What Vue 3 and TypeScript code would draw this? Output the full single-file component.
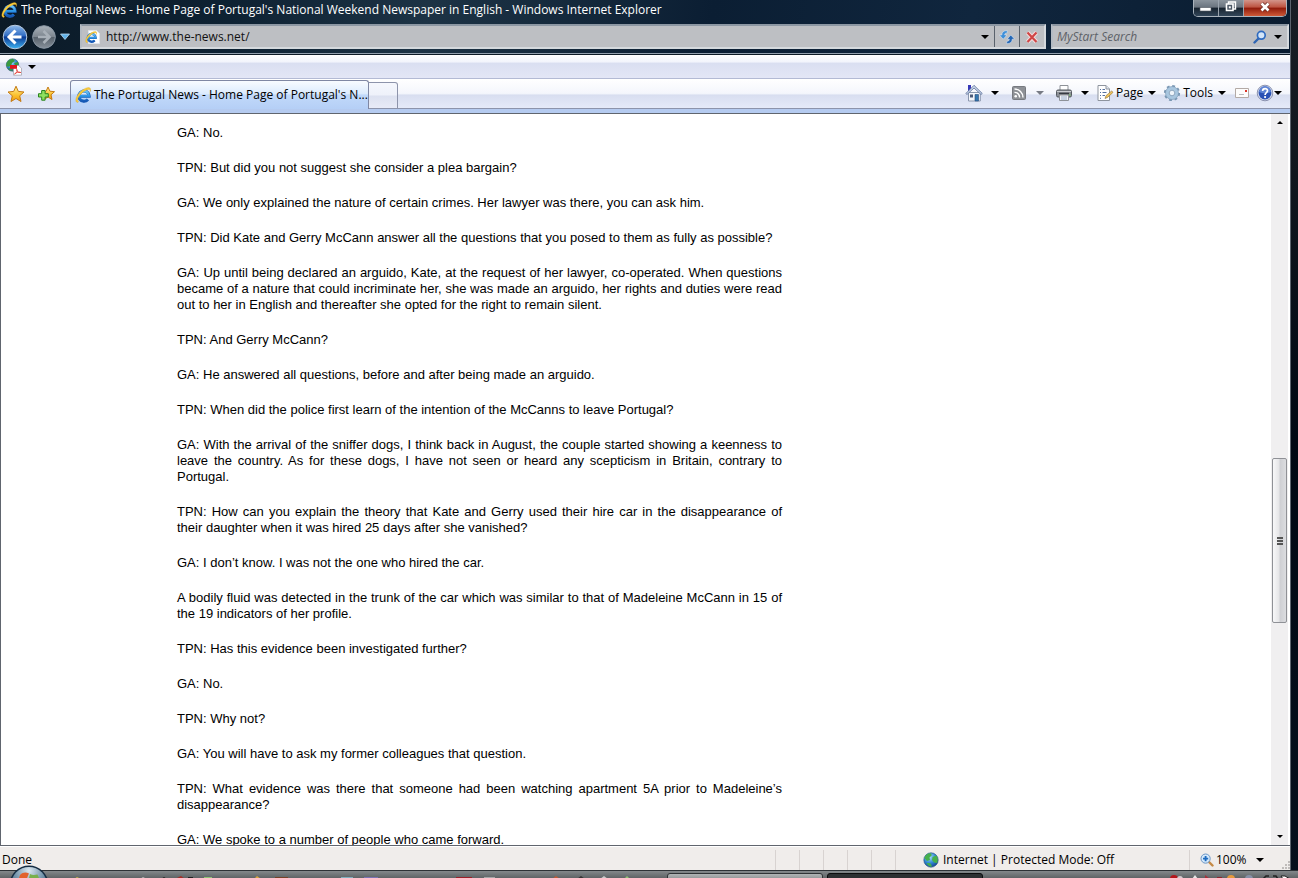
<script setup lang="ts">
import { ref } from 'vue'

interface Command {
  icon: string
  name: string
  label?: string
  arrow: boolean
  muted?: boolean
}

const address = ref('http://www.the-news.net/')
const query = ref('')
const pageTitle = "The Portugal News - Home Page of Portugal's National Weekend Newspaper in English"

const commands: Command[] = [
  { icon: 'home', name: 'home', arrow: true },
  { icon: 'feed', name: 'feeds', arrow: true, muted: true },
  { icon: 'print', name: 'print', arrow: true },
  { icon: 'page', name: 'page', label: 'Page', arrow: true },
  { icon: 'gear', name: 'tools', label: 'Tools', arrow: true },
  { icon: 'mail', name: 'mail', arrow: false },
  { icon: 'help', name: 'help', arrow: true },
]

const paragraphs: string[] = [
  'GA: No.',
  'TPN: But did you not suggest she consider a plea bargain?',
  'GA: We only explained the nature of certain crimes. Her lawyer was there, you can ask him.',
  'TPN: Did Kate and Gerry McCann answer all the questions that you posed to them as fully as possible?',
  'GA: Up until being declared an arguido, Kate, at the request of her lawyer, co-operated. When questions became of a nature that could incriminate her, she was made an arguido, her rights and duties were read out to her in English and thereafter she opted for the right to remain silent.',
  'TPN: And Gerry McCann?',
  'GA: He answered all questions, before and after being made an arguido.',
  'TPN: When did the police first learn of the intention of the McCanns to leave Portugal?',
  'GA: With the arrival of the sniffer dogs, I think back in August, the couple started showing a keenness to leave the country. As for these dogs, I have not seen or heard any scepticism in Britain, contrary to Portugal.',
  'TPN: How can you explain the theory that Kate and Gerry used their hire car in the disappearance of their daughter when it was hired 25 days after she vanished?',
  'GA: I don’t know. I was not the one who hired the car.',
  'A bodily fluid was detected in the trunk of the car which was similar to that of Madeleine McCann in 15 of the 19 indicators of her profile.',
  'TPN: Has this evidence been investigated further?',
  'GA: No.',
  'TPN: Why not?',
  'GA: You will have to ask my former colleagues that question.',
  'TPN: What evidence was there that someone had been watching apartment 5A prior to Madeleine’s disappearance?',
  'GA: We spoke to a number of people who came forward.',
]
</script>

<template>
  <div class="desktop">
    <svg class="defs" aria-hidden="true">
      <defs>
        <linearGradient id="g-e" x1="0" y1="0" x2="0" y2="1">
          <stop offset="0" stop-color="#6cc6f8" />
          <stop offset="0.5" stop-color="#2b95e6" />
          <stop offset="1" stop-color="#1557b5" />
        </linearGradient>
        <linearGradient id="g-back" x1="0" y1="0" x2="0" y2="1">
          <stop offset="0" stop-color="#8fb9ea" />
          <stop offset="0.45" stop-color="#2f6cc4" />
          <stop offset="0.5" stop-color="#0b3a94" />
          <stop offset="1" stop-color="#3fb4f2" />
        </linearGradient>
        <linearGradient id="g-fwd" x1="0" y1="0" x2="0" y2="1">
          <stop offset="0" stop-color="#aab2ba" />
          <stop offset="0.48" stop-color="#7d868f" />
          <stop offset="0.52" stop-color="#58626c" />
          <stop offset="1" stop-color="#87919b" />
        </linearGradient>
        <linearGradient id="g-star" x1="0" y1="0" x2="0" y2="1">
          <stop offset="0" stop-color="#fff2a0" />
          <stop offset="0.6" stop-color="#fbc02c" />
          <stop offset="1" stop-color="#f09a12" />
        </linearGradient>
        <radialGradient id="g-orb" cx="0.5" cy="0.1" r="0.8">
          <stop offset="0" stop-color="#dbe8f0" />
          <stop offset="0.5" stop-color="#7394ab" />
          <stop offset="1" stop-color="#2b4a66" />
        </radialGradient>
        <radialGradient id="g-globe" cx="0.4" cy="0.3" r="0.7">
          <stop offset="0" stop-color="#a6defa" />
          <stop offset="0.6" stop-color="#2f86d3" />
          <stop offset="1" stop-color="#174a94" />
        </radialGradient>
      </defs>
      <symbol id="i-ie" viewBox="0 0 16 16">
        <path d="M4.500 9.200h9.700a5.200 5.200 0 1 0-1.300 3.400" fill="none" stroke="#1a5db5" stroke-width="3" />
        <path d="M4.500 9.200h9.500a5 5 0 1 0-1.300 3.200" fill="none" stroke="url(#g-e)" stroke-width="2.300" />
        <path d="M2.300 15.600C-.4 14.500.8 9.800 4.400 5.800 8.100 1.800 13.300-.6 15.200 1.200c.8.900.5 2.300-.2 3.600.2-1.200.1-2-.6-2.300-1.500-.6-5.200 1-8.400 4.400C2.800 10.300 1.400 13.800 3.800 14.500c-.4.600-.9 1.100-1.500 1.100z" fill="#f8cc3c" stroke="#d59a18" stroke-width=".3" />
      </symbol>
      <symbol id="i-doc" viewBox="0 0 16 16">
        <path d="M3.500 1.500h8l3 3v10h-11z" fill="#fff" stroke="#dfe5ec" />
        <use href="#i-ie" x="0" y="2" width="12" height="12" />
      </symbol>
      <symbol id="i-globepdf" viewBox="0 0 18 18">
        <circle cx="7.500" cy="7" r="6.200" fill="url(#g-globe)" stroke="#35685a" stroke-width=".6" />
        <path d="M2 4.500C4 1.500 6 .8 8 1l2 2-3 2-1 3-3 .8-1.800-1zM9 5l4-1 .5 3-3 1zM3 10l4 .5 1 2.300-3-.5z" fill="#3b9a3f" />
        <path d="M8.500 7.500h5.200l2.800 2.700v7h-8z" fill="#fff" stroke="#a5a5b0" stroke-width=".8" />
        <path d="M5 7h7v3.800H5z" fill="#e0171c" />
        <path d="M9.500 16c3-1.500 3-4 2.300-4.700-.8.300.8 3.800 4 3.200-2-.7-4.500-.2-6.300 1.500z" fill="none" stroke="#e0302a" stroke-width=".8" />
      </symbol>
      <symbol id="i-star" viewBox="0 0 18 18">
        <path d="M9 1.200l2.300 5.200 5.700.6-4.300 3.800 1.300 5.700L9 13.500l-5 3 1.300-5.700L1 7l5.700-.6z" fill="url(#g-star)" stroke="#c47a12" stroke-linejoin="round" />
      </symbol>
      <symbol id="i-addstar" viewBox="0 0 18 18">
        <path d="M11 2l1.900 4.200 4.600.5-3.500 3.100 1 4.700-4-2.500-4 2.500 1-4.700-3.500-3.100 4.600-.5z" fill="url(#g-star)" stroke="#c47a12" stroke-linejoin="round" />
        <path d="M4.700 5.500h3.400v3.200h3.200V12H8.100v3.200H4.700V12H1.500V8.700h3.200z" fill="#8fe05f" stroke="#2b8520" />
      </symbol>
      <symbol id="i-home" viewBox="0 0 18 18">
        <path d="M3 1h3v6H3z" fill="#3538b8" />
        <path d="M3.500 8.500h11.800V17H3.500z" fill="#f3f6fb" stroke="#8a97ae" />
        <path d="M.8 9.500L9 1.300l8.300 8.200-1.300 1L9 4 2 10.500z" fill="#c8d5e8" stroke="#5a6f99" stroke-width=".8" />
        <path d="M10 10.500h3.500V17H10z" fill="#3477ae" stroke="#264b7c" stroke-width=".6" />
        <path d="M5 10.500h3v3H5z" fill="#4c5a78" />
      </symbol>
      <symbol id="i-feed" viewBox="0 0 18 18">
        <rect x="2.500" y="2.500" width="13" height="13" rx="1" fill="#8e9196" stroke="#777a80" />
        <circle cx="5.700" cy="12.300" r="1.300" fill="#fff" />
        <path d="M4.500 8.400a5 5 0 0 1 5.100 5.100M4.500 5a8.500 8.500 0 0 1 8.500 8.500" fill="none" stroke="#fff" stroke-width="1.400" />
      </symbol>
      <symbol id="i-print" viewBox="0 0 18 18">
        <path d="M5 1.500h8V7H5z" fill="#fff" stroke="#8e9298" />
        <rect x="1.500" y="6" width="15" height="7" rx="1.500" fill="#8c9096" stroke="#555a61" />
        <path d="M2 7.500h14" stroke="#c9ccd0" />
        <path d="M4 9.500h10" stroke="#373b41" stroke-width="1.500" />
        <path d="M4.500 11h9v5.500h-9z" fill="#f2f4f7" stroke="#8e9298" />
        <path d="M6 13h6M6 15h6" stroke="#9bb0cc" />
        <path d="M14 11h1.500" stroke="#71d65a" />
      </symbol>
      <symbol id="i-page" viewBox="0 0 18 18">
        <path d="M2 1.500h8l3.500 3.500v11.500H2z" fill="#fff" stroke="#8e949e" />
        <path d="M10 1.500V5h3.500" fill="#dfe5ee" stroke="#8e949e" />
        <path d="M4 5.500h1M6.500 5.500H9M4 8.500h1M6.500 8.500h4M4 11.500h1M6.500 11.500H9M4 14.300h1" stroke="#56719f" />
        <path d="M9 14.500l1-2.800 5.700-4.800 1.300 1.500-5.500 5z" fill="#f0c45a" stroke="#8b6c30" stroke-width=".6" />
      </symbol>
      <symbol id="i-gear" viewBox="0 0 18 18">
        <circle cx="9" cy="9" r="7" fill="none" stroke="#7896b2" stroke-width="2.200" stroke-dasharray="2.800 2.700" />
        <circle cx="9" cy="9" r="4.800" fill="none" stroke="#a8c6df" stroke-width="3.500" />
        <circle cx="9" cy="9" r="2.800" fill="#eef4fa" stroke="#7593b0" stroke-width=".8" />
        <circle cx="9" cy="9" r="6.500" fill="none" stroke="#7896b2" stroke-width=".6" />
      </symbol>
      <symbol id="i-mail" viewBox="0 0 18 18">
        <path d="M2.500 4.500h13v9h-13z" fill="#fdfcfb" stroke="#b3aaa6" />
        <path d="M12 6h2v2h-2z" fill="#dc3528" />
        <path d="M6 10.500h5" stroke="#b9b9bd" />
      </symbol>
      <symbol id="i-help" viewBox="0 0 18 18">
        <circle cx="9" cy="9" r="7.800" fill="#d5dcee" stroke="#777f9e" stroke-width=".8" />
        <circle cx="9" cy="9" r="6.400" fill="#2850b4" />
        <path d="M3 8a6 6 0 0 1 12 0c-4 1.800-8 1.800-12 0z" fill="#5e84d4" />
        <path d="M6.600 7c0-3.300 5-3.200 4.900-.2C11.500 8.800 9.100 8.500 9.100 11" fill="none" stroke="#fff" stroke-width="1.700" />
        <circle cx="9.100" cy="13.100" r="1.100" fill="#fff" />
      </symbol>
      <symbol id="i-refresh" viewBox="0 0 16 16">
        <path d="M8.300 1.500C4.600 1.500 2.800 3.200 2.800 6H.4L4.200 10.200 8 6H5.700c0-1.400.8-2.100 2.600-2.100z" fill="#3f8fd8" stroke="#e8f1fa" stroke-width=".5" />
        <path d="M7.700 14.700c3.700 0 5.500-1.700 5.500-4.500h2.400L11.800 6 8 10.200h2.300c0 1.400-.8 2.100-2.600 2.100z" fill="#2467b5" stroke="#e8f1fa" stroke-width=".5" />
      </symbol>
      <symbol id="i-stop" viewBox="0 0 14 14">
        <path d="M2.500 2.500l9 9.500M11.500 2.500l-9 9.500" stroke="#f4dcdc" stroke-width="4" />
        <path d="M2.500 2.500l9 9.500M11.500 2.500l-9 9.500" stroke="#cf4646" stroke-width="2.200" />
      </symbol>
      <symbol id="i-search" viewBox="0 0 14 14">
        <path d="M1.500 12.500L6 8" stroke="#2f66b4" stroke-width="2.400" stroke-linecap="round" />
        <circle cx="8.300" cy="5.300" r="3.900" fill="#d3e5f8" stroke="#2f6bc0" stroke-width="1.700" />
      </symbol>
      <symbol id="i-zoom" viewBox="0 0 14 14">
        <path d="M8.500 8.500l4 4" stroke="#c58a45" stroke-width="2.400" stroke-linecap="round" />
        <circle cx="5.600" cy="5.600" r="4.600" fill="#d4e9fb" stroke="#6b95c4" />
        <path d="M5.600 3v5.200M3 5.600h5.200" stroke="#1f6cc0" stroke-width="1.900" />
      </symbol>
      <symbol id="i-world" viewBox="0 0 16 16">
        <circle cx="8" cy="8" r="7.200" fill="url(#g-globe)" stroke="#1c4b7c" stroke-width=".6" />
        <path d="M1.300 6C2.500 2.500 5 1 8 1.200l.8 2L6.500 5.500 7 8l-3 1zM9.500 5l4-1.500c1.500 2 1.800 5 .5 7.500L11 10.500 9 8zM3.500 11l4 .3L9 14.600c-2 .3-4-.7-5.500-3.600z" fill="#46b04a" />
      </symbol>
    </svg>

    <div class="window">
      <header class="titlebar">
        <svg class="ic16"><use href="#i-ie" /></svg>
        <h1 class="caption">{{ pageTitle }} - Windows Internet Explorer</h1>
        <div class="winbtns">
          <button class="wb" type="button" aria-label="Minimize">
            <svg viewBox="0 0 24 14"><rect x="6" y="7.500" width="11" height="3.500" fill="#fff" stroke="#555c66" stroke-width=".6" /></svg>
          </button>
          <button class="wb" type="button" aria-label="Restore">
            <svg viewBox="0 0 24 14">
              <path d="M9.500 2h7v7h-7z" fill="none" stroke="#fff" stroke-width="1.400" />
              <path d="M7.500 4h6.500v6.500H7.500z" fill="#4c5866" stroke="#fff" stroke-width="1.600" />
              <path d="M9.800 6.300h2v2h-2z" fill="#fff" />
            </svg>
          </button>
          <button class="wb close" type="button" aria-label="Close">
            <svg viewBox="0 0 24 14"><path d="M8.500 3.500l7 7M15.500 3.500l-7 7" stroke="#6b2a22" stroke-width="4" /><path d="M8.500 3.500l7 7M15.500 3.500l-7 7" stroke="#fff" stroke-width="2.600" /></svg>
          </button>
        </div>
      </header>

      <nav class="navbar">
        <div class="travel">
          <button class="round" type="button" aria-label="Back">
            <svg viewBox="0 0 26 26">
              <circle cx="13" cy="13" r="11.800" fill="url(#g-back)" stroke="#b9cbe0" />
              <path d="M13.500 6.500L7 13l6.500 6.500M7.500 13h12" fill="none" stroke="#fff" stroke-width="3" />
            </svg>
          </button>
          <button class="round" type="button" aria-label="Forward">
            <svg viewBox="0 0 26 26">
              <circle cx="13" cy="13" r="11.300" fill="url(#g-fwd)" stroke="#8b98a5" />
              <path d="M12.500 7l6 6-6 6M18 13H7" fill="none" stroke="#a9b1b9" stroke-width="2.600" />
            </svg>
          </button>
          <button class="plain" type="button" aria-label="Recent pages">
            <svg class="recent" viewBox="0 0 10 8"><path d="M.5 1h9L5 6.500z" fill="#5fb1e8" stroke="#b9daf1" stroke-width=".8" /></svg>
          </button>
        </div>
        <div class="field address">
          <svg class="ic16"><use href="#i-doc" /></svg>
          <input v-model="address" type="text" aria-label="Address" />
          <button class="plain drop" type="button" aria-label="Show addresses"><i class="arrow"></i></button>
          <button class="plain cell" type="button" aria-label="Refresh"><svg class="ic16"><use href="#i-refresh" /></svg></button>
          <button class="plain cell" type="button" aria-label="Stop"><svg class="ic14"><use href="#i-stop" /></svg></button>
        </div>
        <div class="field search">
          <input v-model="query" type="search" placeholder="MyStart Search" aria-label="MyStart Search" />
          <button class="plain" type="button" aria-label="Search"><svg class="ic14"><use href="#i-search" /></svg></button>
          <button class="plain drop" type="button" aria-label="Search options"><i class="arrow"></i></button>
        </div>
      </nav>

      <div class="links">
        <button class="plain" type="button" aria-label="Convert to PDF"><svg class="ic18"><use href="#i-globepdf" /></svg></button>
        <button class="plain" type="button" aria-label="Convert options"><i class="arrow"></i></button>
      </div>

      <div class="tabbar">
        <div class="favs">
          <button class="plain" type="button" aria-label="Favorites Center"><svg class="ic18"><use href="#i-star" /></svg></button>
          <button class="plain" type="button" aria-label="Add to Favorites"><svg class="ic18"><use href="#i-addstar" /></svg></button>
        </div>
        <button class="tab" type="button">
          <svg class="ic16"><use href="#i-ie" /></svg>
          <span>The Portugal News - Home Page of Portugal's N...</span>
        </button>
        <button class="newtab" type="button" aria-label="New Tab"></button>
        <div class="commands">
          <button v-for="c in commands" :key="c.name" class="plain cmd" :class="[c.name, { muted: c.muted }]" type="button" :aria-label="c.name">
            <svg class="ic18"><use :href="'#i-' + c.icon" /></svg>
            <span v-if="c.label">{{ c.label }}</span>
            <i v-if="c.arrow" class="arrow"></i>
          </button>
        </div>
      </div>

      <div class="view">
        <main class="content">
          <article>
            <p v-for="(p, i) in paragraphs" :key="i">{{ p }}</p>
          </article>
        </main>
        <div class="scroll">
          <button class="plain sb" type="button" aria-label="Scroll up"><i class="arrow small up"></i></button>
          <div class="track">
            <div class="thumb"><i></i><i></i><i></i></div>
          </div>
          <button class="plain sb" type="button" aria-label="Scroll down"><i class="arrow small"></i></button>
        </div>
      </div>

      <footer class="status">
        <span class="done">Done</span>
        <span v-for="n in 6" :key="n" class="pane"></span>
        <span class="zone"><svg class="ic16"><use href="#i-world" /></svg>Internet | Protected Mode: Off</span>
        <button class="plain zoom" type="button">
          <svg class="ic14"><use href="#i-zoom" /></svg><span>100%</span><i class="arrow"></i>
        </button>
        <svg class="grip" viewBox="0 0 10 10"><path d="M8 1h2v2H8zM8 4h2v2H8zM5 4h2v2H5zM8 7h2v2H8zM5 7h2v2H5zM2 7h2v2H2z" fill="#bfbcba" /></svg>
      </footer>
    </div>

    <div class="taskbar">
      <svg class="bits" viewBox="0 0 667 8" aria-hidden="true">
        <path d="M74 8l3-2 4 2z" fill="#cdb545" />
        <path d="M140 8l3-2 4 2z" fill="#b9bdbd" />
        <path d="M161 8l3-2 3 2zM188 8v-2h5v2z" fill="#222" />
        <path d="M175 8l6-3 4 3z" fill="#a52c26" />
        <path d="M204 6h8v2h-8zM624 8l3-3 3 3z" fill="#8ec474" />
        <path d="M254 8l3-3 4 3z" fill="#dba53d" />
        <path d="M275 6h13v2h-13z" fill="#764128" />
        <path d="M341 6h12v2h-12z" fill="#7eaebd" />
        <path d="M364 6h14v2h-14z" fill="#7a72b4" />
        <path d="M456 6h16v2h-16z" fill="#9a2029" />
        <path d="M484 6h11v2h-11z" fill="#a4a7a8" />
        <path d="M552 8l4-3 4 3z" fill="#c25a35" />
        <path d="M577 8l4-3 4 3z" fill="#333" />
        <path d="M600 8l4-3 4 3z" fill="#c8cbcc" />
      </svg>
      <button class="task" type="button" aria-label="Task one"></button>
      <button class="task active" type="button" aria-label="Task two"></button>
      <svg class="tray" viewBox="0 0 130 8" aria-hidden="true">
        <circle cx="6" cy="8" r="4" fill="#b4161c" /><circle cx="12" cy="8" r="3" fill="#d5cbd0" />
        <path d="M24 8l3-4 3 4z" fill="#e4e6e7" /><path d="M37 4l5 4h-5z" fill="#a8303a" />
        <path d="M49 6h5v2h-5z" fill="#8e2630" /><circle cx="63" cy="8" r="4" fill="#e79a3d" />
        <circle cx="81" cy="8" r="4" fill="#8791a8" />
        <path d="M95 8l3-3h3M105 5h3l2 3" fill="none" stroke="#222" stroke-width="1.500" />
        <path d="M113 5h4l5 3h-7z" fill="#fff" stroke="#222" />
      </svg>
    </div>
    <button class="orb" type="button" aria-label="Start">
      <svg viewBox="0 0 40 13">
        <circle cx="20" cy="20" r="19.500" fill="#142c42" />
        <circle cx="20" cy="20" r="18" fill="url(#g-orb)" />
        <path d="M11 10c3-3 6-3 9-1.500L18 13H10z" fill="#e2622d" />
        <path d="M21 9c3 1.500 5 1 7.500.5L30 13H20z" fill="#79b04c" />
      </svg>
    </button>
  </div>
</template>

<style>
html,
body,
#app {
  height: 100%;
  margin: 0;
}
</style>

<style scoped>
.desktop {
  position: relative;
  box-sizing: border-box;
  display: flex;
  flex-direction: column;
  height: 100vh;
  overflow: hidden;
  background: linear-gradient(#181e25, #10161e 20%, #000813 50%, #06101d);
  font-family: "Open Sans", "Noto Sans", sans-serif;
  font-size: 12px;
  line-height: 16px;
  color: #000;
}
.defs {
  position: absolute;
  width: 0;
  height: 0;
}
.window {
  flex: 1;
  min-height: 0;
  display: flex;
  flex-direction: column;
  margin-right: 7px;
  border-right: 1px solid #5b636d;
  background: linear-gradient(100deg, #0b1a27 0, #0e2233 18%, #1d3345 33%, #14283b 45%, #0b1e33 55%, #10263e 75%, #0a1c30 100%) top / 100% 54px no-repeat;
}
svg {
  display: block;
  flex: none;
}
.ic14 { width: 14px; height: 14px; }
.ic16 { width: 16px; height: 16px; }
.ic18 { width: 18px; height: 18px; }
button {
  font: inherit;
  color: inherit;
  padding: 0;
  margin: 0;
}
.plain {
  display: flex;
  align-items: center;
  border: 0;
  background: none;
}
.arrow {
  width: 0;
  height: 0;
  border: 4px solid transparent;
  border-top-color: #000;
  border-bottom: 0;
}
.small {
  border-width: 3px;
  border-bottom: 0;
}
.up {
  border-bottom: 3px solid #000;
  border-top: 0;
}

.titlebar {
  display: flex;
  gap: 4px;
  height: 22px;
  padding: 2px 0 0 1px;
  box-sizing: border-box;
}
.caption {
  flex: 1;
  min-width: 0;
  margin: 0;
  font-size: 12px;
  line-height: 16px;
  font-weight: 400;
  white-space: nowrap;
  overflow: hidden;
  color: #fff;
}
.winbtns {
  display: flex;
  height: 17px;
  margin: -2px 3px 0 0;
  border: 1px solid #aab3bc;
  border-top: 0;
  border-radius: 0 0 5px 5px;
  overflow: hidden;
  box-sizing: border-box;
}
.wb {
  display: flex;
  justify-content: center;
  width: 25px;
  border: 0;
  border-right: 1px solid #9aa4ae;
  background: linear-gradient(#8b949d 0, #6a747f 45%, #17222e 50%, #33465a 100%);
}
.wb svg { width: 24px; height: 14px; }
.close {
  width: 42px;
  border-right: 0;
  background: linear-gradient(#d3958a 0, #bd5340 45%, #8f1a0a 50%, #cf5a38 100%);
}

.navbar {
  display: flex;
  align-items: center;
  height: 32px;
  padding: 0 1px 2px 0;
  box-sizing: border-box;
  border-bottom: 1px solid #93a0ae;
}
.travel {
  display: flex;
  align-items: center;
  gap: 3px;
  width: 78px;
  padding-left: 2px;
}
.round {
  border: 0;
  border-radius: 50%;
  background: none;
}
.round svg { width: 26px; height: 26px; }
.recent { width: 10px; height: 8px; }
.field {
  display: flex;
  align-items: center;
  height: 25px;
  box-sizing: border-box;
  border: 2px solid #d5d9dd;
  border-color: #8c97a3 #d5d9dd #d5d9dd #b4bbc3;
  background: #bdbfc3;
}
.field input {
  flex: 1;
  min-width: 0;
  padding: 0 0 0 5px;
  border: 0;
  outline: 0;
  background: none;
  font: inherit;
  color: #111;
}
.address {
  flex: 1;
  padding-left: 3px;
}
.drop {
  justify-content: center;
  width: 18px;
}
.cell {
  justify-content: center;
  width: 25px;
  height: 21px;
  border-left: 1px solid #5a626c;
}
.search {
  flex: 0 1 238px;
  margin-left: 5px;
}
.search input { padding-left: 4px; }
.search .drop { margin-left: 2px; }
.search input::placeholder {
  font-style: italic;
  color: #5d6268;
  opacity: 1;
}

.links {
  display: flex;
  align-items: center;
  gap: 5px;
  height: 25px;
  padding-left: 5px;
  box-sizing: border-box;
  border-top: 1px solid #0d1a26;
  border-bottom: 1px solid #b3bad4;
  background: linear-gradient(#fff, #f2f4fc 30%, #dadff1 36%, #e3e6f6);
}
.tabbar {
  display: flex;
  align-items: flex-end;
  height: 34px;
  box-sizing: border-box;
  border-bottom: 4px solid #b5cbf0;
  background: linear-gradient(#fff, #f4f6fc 48%, #d8def0 54%, #e6ebf9);
}
.favs {
  display: flex;
  align-items: center;
  gap: 12px;
  width: 70px;
  height: 29px;
  padding-left: 7px;
  box-sizing: border-box;
  border-bottom: 1px solid #8d94ab;
}
.tab {
  display: flex;
  align-items: center;
  gap: 3px;
  width: 299px;
  height: 29px;
  padding: 0 4px;
  border: 1px solid #7f87a3;
  border-bottom: 0;
  border-radius: 3px 3px 0 0;
  background: linear-gradient(#f8fbff, #dcebfd 45%, #c1d9fa 50%, #b5cff6);
  white-space: nowrap;
}
.newtab {
  width: 29px;
  height: 27px;
  border: 1px solid #8d94ab;
  border-left: 0;
  border-radius: 0 3px 0 0;
  background: linear-gradient(#f5f7fd, #eef1fa 48%, #dce1f0 52%, #e8ebf7);
}
.commands {
  flex: 1;
  display: flex;
  justify-content: flex-end;
  align-items: center;
  height: 30px;
  padding: 0 8px 1px 0;
  box-sizing: border-box;
  border-bottom: 1px solid #8d94ab;
}
.cmd span { margin: 0 5px 0 2px; }
.home, .feeds, .print { gap: 8px; margin-right: 11px; }
.print, .page, .tools { margin-right: 7px; }
.mail { margin-right: 5px; }
.muted .arrow { border-top-color: #777b84; }

.view {
  flex: 1;
  min-height: 0;
  display: flex;
  border: 1px solid #60656e;
  border-right: 0;
  background: #fff;
}
.content {
  flex: 1;
  min-width: 0;
  overflow: hidden;
}
article {
  max-width: 605px;
  padding: 11px 0 0 176px;
  font-family: "Liberation Sans", Arial, sans-serif;
  font-size: 13px;
  line-height: 16px;
  text-align: justify;
}
article p { margin: 0 0 19px; }
.scroll {
  display: flex;
  flex-direction: column;
  width: 17px;
  margin-right: 2px;
  background: #f0eff0;
}
.sb {
  justify-content: center;
  height: 17px;
}
.track {
  flex: 1;
  display: grid;
  grid-template-rows: 327fr 165fr 205fr;
}
.thumb {
  grid-row: 2;
  display: flex;
  flex-direction: column;
  align-items: center;
  justify-content: center;
  gap: 1px;
  margin: 0 1px;
  border: 1px solid #8f9196;
  border-radius: 2px;
  background: linear-gradient(90deg, #f8f8f9, #e6e6e8 45%, #cfd0d4 55%, #dcdde0);
}
.thumb i {
  width: 6px;
  height: 2px;
  background: #555;
}

.status {
  display: flex;
  align-items: center;
  height: 24px;
  padding-top: 2px;
  border-top: 1px solid #fff;
  box-sizing: border-box;
  background: #f0edeb;
}
.done {
  flex: 1;
  padding-left: 2px;
}
.pane {
  width: 24px;
  height: 20px;
  box-sizing: border-box;
  border-left: 1px solid #d8d3d1;
}
.zone {
  display: flex;
  align-items: center;
  gap: 4px;
  width: 270px;
  height: 20px;
  padding-left: 4px;
  box-sizing: border-box;
}
.zoom {
  width: 88px;
  height: 20px;
  margin-right: 3px;
  padding: 0 13px 0 10px;
  border-left: 1px solid #d8d3d1;
  gap: 2px;
}
.zoom .arrow { margin-left: auto; }
.grip {
  width: 10px;
  height: 10px;
  align-self: flex-end;
}

.taskbar {
  display: flex;
  height: 8px;
  overflow: hidden;
  border-top: 1px solid #2d3236;
  box-sizing: border-box;
  background: linear-gradient(#83888b, #5f6466);
}
.bits {
  width: 667px;
  height: 8px;
}
.task {
  width: 156px;
  height: 12px;
  margin: 2px 4px 0 0;
  border: 1px solid #303437;
  border-radius: 3px;
  background: linear-gradient(#b1b4b5, #8a8e90 60%);
}
.active { background: #2c2f31; border-color: #0c0d0e; }
.tray {
  width: 130px;
  height: 8px;
  margin-left: auto;
}
.orb {
  position: absolute;
  left: 9px;
  bottom: 0;
  border: 0;
  background: none;
}
.orb svg { width: 40px; height: 13px; }
</style>
